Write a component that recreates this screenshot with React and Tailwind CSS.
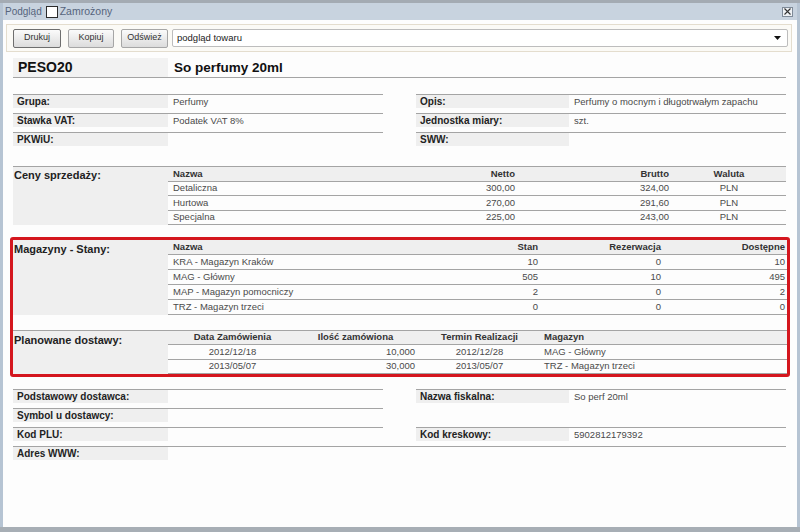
import React from "react";

const ceny = [
  ["Detaliczna", "300,00", "324,00", "PLN"],
  ["Hurtowa", "270,00", "291,60", "PLN"],
  ["Specjalna", "225,00", "243,00", "PLN"],
];

const stany = [
  ["KRA - Magazyn Kraków", "10", "0", "10"],
  ["MAG - Główny", "505", "10", "495"],
  ["MAP - Magazyn pomocniczy", "2", "0", "2"],
  ["TRZ - Magazyn trzeci", "0", "0", "0"],
];

const dostawy = [
  ["2012/12/18", "10,000", "2012/12/28", "MAG - Główny"],
  ["2013/05/07", "30,000", "2013/05/07", "TRZ - Magazyn trzeci"],
];

const line = "border-[#a4a4a4]";

function Field({ label, value, border = true, right = false, tall = false, extend = false }) {
  return (
    <div
      className={`flex items-start ${tall ? "h-[38px]" : "h-[19px]"} ${
        border ? `border-b ${line}` : ""
      } ${extend ? "mr-[-33px]" : ""}`}
    >
      <div
        className={`${right ? "w-[153px]" : "w-[155px]"} h-[13px] shrink-0 bg-[#efefef] pl-[4px] text-[10px] font-bold leading-[13px] text-[#222]`}
      >
        {label}
      </div>
      <div className="pl-[5px] text-[9.5px] leading-[13px] text-[#4a4a4a]">{value}</div>
    </div>
  );
}

function Button({ children, width, focused }) {
  return (
    <div
      className={`${width} h-[19px] shrink-0 flex items-center justify-center rounded-[2px] border ${
        focused ? "border-[#6e6e6e]" : "border-[#a6a6a6]"
      } bg-linear-to-b from-[#fbfbfb] to-[#dcdcdc] text-[9px] text-[#333]`}
    >
      {children}
    </div>
  );
}

function SectionLabel({ children, pt }) {
  return (
    <div className={`w-[155px] shrink-0 bg-[#efefef] pl-[1px] ${pt} text-[11px] font-bold leading-[13px] text-[#222]`}>
      {children}
    </div>
  );
}

export default function App() {
  return (
    <div className="w-[800px] h-[532px] overflow-hidden border-t-[3px] border-b-[5px] border-t-[#a4abb3] border-b-[#a7aeb5] bg-[#b6c4d3] px-[3px] font-['Liberation_Sans',Arial,sans-serif]">
      <div className="flex h-full flex-col">
        {/* title bar */}
        <div className="flex h-[17px] shrink-0 items-center bg-[#c8d3df] pl-[2px] text-[10px] text-[#56647c]">
          <span>Podgląd</span>
          <span className="ml-[4px] h-[12px] w-[12px] border border-[#2b2b2b] bg-white" />
          <span className="ml-[2px] text-[10.5px]">Zamrożony</span>
          <div className="ml-auto mr-[4px] flex h-[10px] w-[11px] items-center justify-center border border-[#7f8b99] bg-[#eef1f4]">
            <svg width="7" height="7" viewBox="0 0 7 7">
              <path d="M0.5 0.5 L6.5 6.5 M6.5 0.5 L0.5 6.5" stroke="#333" strokeWidth="1.1" />
            </svg>
          </div>
        </div>

        {/* content */}
        <div className="flex-1 bg-[#fdfdfd]">
          {/* toolbar */}
          <div className="ml-[3px] mt-[4px] flex h-[28px] w-[786px] items-center border border-[#e4ddce] bg-[#fbfaf6] pl-[6px] pr-[3px]">
            <Button width="w-[48px]" focused>
              Drukuj
            </Button>
            <div className="ml-[7px]">
              <Button width="w-[46px]">Kopiuj</Button>
            </div>
            <div className="ml-[7px]">
              <Button width="w-[47px]">Odśwież</Button>
            </div>
            <div className="ml-[4px] flex h-[18px] flex-1 items-center rounded-[2px] border border-[#bdbdbd] bg-white pl-[4px] pr-[6px] text-[9.5px] text-[#222]">
              <span>podgląd towaru</span>
              <svg className="ml-auto" width="7" height="4" viewBox="0 0 7 4">
                <path d="M0 0 H7 L3.5 4 Z" fill="#111" />
              </svg>
            </div>
          </div>

          <div className="ml-[10px] w-[773px]">
            {/* header */}
            <div className={`mt-[6px] flex h-[20px] border-b ${line}`}>
              <div className="w-[155px] bg-[#f2f2f2] pl-[5px] text-[14px] font-bold leading-[19px] text-[#111]">
                PESO20
              </div>
              <div className="pl-[6px] text-[13.5px] font-bold leading-[19px] text-[#111]">So perfumy 20ml</div>
            </div>

            {/* basic info */}
            <div className="mt-[16px] flex gap-[33px]">
              <div className={`w-[370px] border-t ${line}`}>
                <Field label="Grupa:" value="Perfumy" />
                <Field label="Stawka VAT:" value="Podatek VAT 8%" />
                <Field label="PKWiU:" value="" border={false} />
              </div>
              <div className={`w-[370px] border-t ${line}`}>
                <Field right label="Opis:" value="Perfumy o mocnym i długotrwałym zapachu" />
                <Field right label="Jednostka miary:" value="szt." />
                <Field right label="SWW:" value="" border={false} />
              </div>
            </div>

            {/* prices */}
            <div className={`mt-[14px] flex border-t ${line}`}>
              <SectionLabel pt="pt-[2px]">Ceny sprzedaży:</SectionLabel>
              <div className="w-[618px]">
                <div className={`flex h-[14.5px] items-center border-b ${line} bg-[#efefef] text-[9.5px] font-bold text-[#333]`}>
                  <div className="w-[240px] pl-[5px]">Nazwa</div>
                  <div className="w-[110px] pr-[3px] text-right">Netto</div>
                  <div className="w-[154px] pr-[3px] text-right">Brutto</div>
                  <div className="w-[114px] text-center">Waluta</div>
                </div>
                {ceny.map(([n, netto, brutto, waluta]) => (
                  <div key={n} className={`flex h-[14.5px] items-center border-b ${line} text-[9.5px] text-[#4a4a4a]`}>
                    <div className="w-[240px] pl-[5px]">{n}</div>
                    <div className="w-[110px] pr-[3px] text-right">{netto}</div>
                    <div className="w-[154px] pr-[3px] text-right">{brutto}</div>
                    <div className="w-[114px] text-center">{waluta}</div>
                  </div>
                ))}
              </div>
            </div>

            {/* highlighted stock box */}
            <div className="ml-[-3px] mt-[12px] w-[780px] rounded-[3px] border-[3px] border-[#d4161e]">
              <div className="flex">
                <SectionLabel pt="pt-[3px]">Magazyny - Stany:</SectionLabel>
                <div className="flex-1">
                  <div className={`flex h-[15px] items-center border-b ${line} bg-[#efefef] text-[9.5px] font-bold text-[#333]`}>
                    <div className="w-[250px] pl-[5px]">Nazwa</div>
                    <div className="w-[123px] pr-[3px] text-right">Stan</div>
                    <div className="w-[123px] pr-[3px] text-right">Rezerwacja</div>
                    <div className="flex-1 pr-[2px] text-right">Dostępne</div>
                  </div>
                  {stany.map(([n, stan, rez, dost]) => (
                    <div key={n} className={`flex h-[15px] items-center border-b ${line} text-[9.5px] text-[#4a4a4a]`}>
                      <div className="w-[250px] pl-[5px]">{n}</div>
                      <div className="w-[123px] pr-[3px] text-right">{stan}</div>
                      <div className="w-[123px] pr-[3px] text-right">{rez}</div>
                      <div className="flex-1 pr-[2px] text-right">{dost}</div>
                    </div>
                  ))}
                </div>
              </div>

              <div className={`mt-[15px] flex border-t ${line}`}>
                <SectionLabel pt="pt-[3px]">Planowane dostawy:</SectionLabel>
                <div className="flex-1">
                  <div className={`flex h-[14px] items-center border-b ${line} bg-[#efefef] text-[9.5px] font-bold text-[#333]`}>
                    <div className="w-[129px] text-center">Data Zamówienia</div>
                    <div className="w-[121px] pr-[4px] text-center">Ilość zamówiona</div>
                    <div className="w-[123px] text-center">Termin Realizacji</div>
                    <div className="flex-1 pl-[3px]">Magazyn</div>
                  </div>
                  {dostawy.map(([data, ilosc, termin, mag]) => (
                    <div key={data + mag} className={`flex h-[14.5px] items-center border-b ${line} text-[9.5px] text-[#4a4a4a]`}>
                      <div className="w-[129px] text-center">{data}</div>
                      <div className="w-[121px] pr-[3px] text-right">{ilosc}</div>
                      <div className="w-[123px] text-center">{termin}</div>
                      <div className="flex-1 pl-[3px]">{mag}</div>
                    </div>
                  ))}
                </div>
              </div>
            </div>

            {/* supplier info */}
            <div className="mt-[12px] flex gap-[33px]">
              <div className={`w-[370px] border-t ${line}`}>
                <Field label="Podstawowy dostawca:" value="" />
                <Field label="Symbol u dostawcy:" value="" />
                <Field label="Kod PLU:" value="" extend />
                <Field label="Adres WWW:" value="" border={false} />
              </div>
              <div className={`w-[370px] border-t ${line}`}>
                <Field right tall label="Nazwa fiskalna:" value="So perf 20ml" />
                <Field right label="Kod kreskowy:" value="5902812179392" />
              </div>
            </div>
          </div>
        </div>
      </div>
    </div>
  );
}
